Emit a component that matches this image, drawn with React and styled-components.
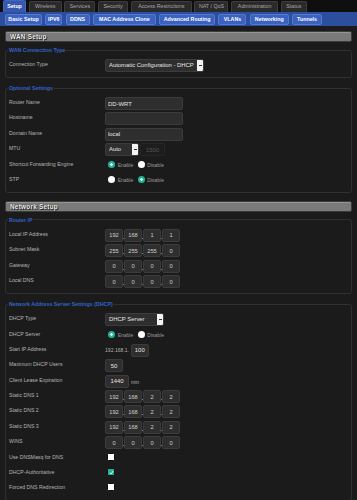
import { Fragment } from 'react'
import styled, { createGlobalStyle } from 'styled-components'

const FONT = '"Liberation Sans", Arial, sans-serif'

const GlobalStyle = createGlobalStyle`
  html, body {
    margin: 0;
    padding: 0;
    background: #1b1b1b;
  }
  body {
    font-family: ${FONT};
    width: 357px;
    height: 500px;
    overflow: hidden;
  }
`

const MAIN_TABS = [
  { label: 'Setup', w: 23, active: true },
  { label: 'Wireless', w: 33 },
  { label: 'Services', w: 31 },
  { label: 'Security', w: 30 },
  { label: 'Access Restrictions', w: 61 },
  { label: 'NAT / QoS', w: 34 },
  { label: 'Administration', w: 47 },
  { label: 'Status', w: 26 },
]

const SUB_TABS = [
  { label: 'Basic Setup', w: 37 },
  { label: 'IPV6', w: 17 },
  { label: 'DDNS', w: 24 },
  { label: 'MAC Address Clone', w: 63 },
  { label: 'Advanced Routing', w: 56 },
  { label: 'VLANs', w: 28 },
  { label: 'Networking', w: 39 },
  { label: 'Tunnels', w: 30 },
]

const TopBar = styled.nav`
  display: flex;
  align-items: flex-end;
  gap: 2.7px;
  height: 12px;
  box-sizing: border-box;
  padding-left: 3px;
  background: #0f0f0f;
`

const MainTab = styled.div`
  box-sizing: border-box;
  width: ${({ $w }) => $w}px;
  height: ${({ $active }) => $active ? 12 : 11}px;
  display: flex;
  align-items: center;
  justify-content: center;
  font: ${({ $active }) => $active ? 'bold' : 'normal'} 5.3px/1 ${FONT};
  color: ${({ $active }) => $active ? '#ffffff' : '#a8a8a8'};
  background: ${({ $active }) => $active ? '#3459ad' : '#2a2a2a'};
  border: 1px solid ${({ $active }) => $active ? '#4166bb' : '#3d3d3d'};
  border-bottom: none;
  border-radius: 2px 2px 0 0;
  white-space: nowrap;
`

const SubBar = styled.nav`
  display: flex;
  gap: 3.3px;
  height: 14px;
  box-sizing: border-box;
  padding: 2px 0 1px 5px;
  background: #2d4d9d;
`

const SubTab = styled.div`
  box-sizing: border-box;
  width: ${({ $w }) => $w}px;
  height: 11px;
  display: flex;
  align-items: center;
  justify-content: center;
  font: bold 5.3px/1 ${FONT};
  color: #ffffff;
  background: #3b62c1;
  border: 1px solid #5379d1;
  border-radius: 2px;
  white-space: nowrap;
`

const Section = styled.section`
  padding-top: 5px;
  & + & {
    padding-top: 8px;
  }
`

const SectionTitle = styled.h2`
  margin: 0 5px 4px;
  height: 11px;
  box-sizing: border-box;
  padding-left: 4px;
  background: #7a7a7a;
  border: 1px solid #3c3c3c;
  border-radius: 2px;
  box-shadow: inset 0 1px 0 #959595;
  font: bold 6.3px/9px ${FONT};
  letter-spacing: 0.3px;
  color: #f2f2f2;
  text-shadow: 0 0 1px #000, 1px 1px 0 #2a2a2a;
`

const Group = styled.fieldset`
  margin: 0 5px;
  padding: 5px 3px;
  min-width: 0;
  border: 1px solid #303030;
  border-radius: 3px;
  & + & {
    margin-top: 6px;
  }
`

const Legend = styled.legend`
  padding: 0 1px;
  margin-left: -1px;
  font: bold 5.3px/8px ${FONT};
  color: #3462c8;
`

const Row = styled.div`
  display: flex;
  align-items: flex-start;
  min-height: 13px;
  & + & {
    margin-top: 2.4px;
  }
`

const Label = styled.div`
  flex: none;
  width: 96px;
  padding-top: 2px;
  font: 5.2px/7px ${FONT};
  color: #b4b4b4;
`

const Controls = styled.div`
  display: flex;
  align-items: flex-start;
`

const TextInput = styled.input`
  box-sizing: border-box;
  width: ${({ $w }) => $w}px;
  height: 13px;
  margin: 0;
  padding: 0 2px;
  background: ${({ disabled }) => disabled ? '#1d1d1d' : '#2e2e2e'};
  border: 1px solid ${({ disabled }) => disabled ? '#272727' : '#3c3c3c'};
  border-radius: 2px;
  outline: none;
  font: 5.9px ${FONT};
  color: ${({ disabled }) => disabled ? '#575757' : '#e4e4e4'};
  text-align: ${({ $center }) => $center ? 'center' : 'left'};
`

const OctetInput = styled(TextInput)`
  font-size: 5.7px;
  color: #cfcfcf;
`

const IpDot = styled.span`
  align-self: flex-end;
  width: 1px;
  height: 1px;
  margin-bottom: 3px;
  background: #7a7a7a;
`

const Select = styled.div`
  display: flex;
  box-sizing: border-box;
  width: ${({ $w }) => $w}px;
  height: 13px;
  background: #2e2e2e;
  border: 1px solid #3c3c3c;
  border-radius: 2px;
  overflow: hidden;
`

const SelectText = styled.span`
  flex: 1;
  padding-left: 3px;
  font: 5.9px/11px ${FONT};
  color: #e4e4e4;
  white-space: nowrap;
  overflow: hidden;
`

const SelectArrow = styled.span`
  flex: none;
  width: 6px;
  display: flex;
  align-items: center;
  justify-content: center;
  background: #f3f3f3;
  &::after {
    content: '';
    width: 3px;
    height: 1px;
    background: #333;
  }
`

const Choice = styled.div`
  display: flex;
  align-items: flex-start;
  padding-left: 3px;
`

const Radio = styled.span`
  flex: none;
  width: 7px;
  height: 7px;
  margin-top: 2px;
  border-radius: 50%;
  background: ${({ $on }) => $on
    ? 'radial-gradient(circle, #e9fff8 0 1.1px, #1fb596 1.5px)'
    : '#ffffff'};
`

const ChoiceText = styled.span`
  margin: 0 4.4px 0 2.7px;
  padding-top: 3px;
  font: 5px/7px ${FONT};
  color: #9c9c9c;
`

const Hint = styled.span`
  padding: ${({ $pad }) => $pad || '3px 0 0'};
  font: 5.1px/7px ${FONT};
  color: #b0b0b0;
  white-space: nowrap;
`

const Check = styled.span`
  flex: none;
  box-sizing: border-box;
  width: 8px;
  height: 8px;
  margin: 1px 0 0 2px;
  display: flex;
  align-items: center;
  justify-content: center;
  border: 1px solid #0c0c0c;
  border-radius: 1.5px;
  background: ${({ $on }) => $on ? '#1db394' : '#ffffff'};
`

const Field = ({ label, children }) =>
  <Row>
    <Label>{label}</Label>
    <Controls>{children}</Controls>
  </Row>

const Dropdown = ({ w, value }) =>
  <Select $w={w}>
    <SelectText>{value}</SelectText>
    <SelectArrow />
  </Select>

const IpField = ({ parts }) =>
  <>
    {parts.map((p, i) =>
      <Fragment key={i}>
        {i > 0 && <IpDot />}
        <OctetInput $w={18} $center value={p} readOnly />
      </Fragment>
    )}
  </>

const RadioPair = ({ enabled }) =>
  <Choice>
    <Radio $on={enabled} />
    <ChoiceText>Enable</ChoiceText>
    <Radio $on={!enabled} />
    <ChoiceText>Disable</ChoiceText>
  </Choice>

const Checkbox = ({ on }) =>
  <Check $on={on}>
    {on &&
      <svg width="5" height="5" viewBox="0 0 10 10">
        <path d="M1.5 5.5l2.5 2.5 4.5-6" stroke="#fff" strokeWidth="1.8" fill="none" />
      </svg>}
  </Check>

const App = () =>
  <>
    <GlobalStyle />
    <TopBar>
      {MAIN_TABS.map(t =>
        <MainTab key={t.label} $w={t.w} $active={t.active}>{t.label}</MainTab>)}
    </TopBar>
    <SubBar>
      {SUB_TABS.map(t => <SubTab key={t.label} $w={t.w}>{t.label}</SubTab>)}
    </SubBar>

    <Section>
      <SectionTitle>WAN Setup</SectionTitle>
      <Group>
        <Legend>WAN Connection Type</Legend>
        <Field label="Connection Type">
          <Dropdown w={99} value="Automatic Configuration - DHCP" />
        </Field>
      </Group>
      <Group>
        <Legend>Optional Settings</Legend>
        <Field label="Router Name">
          <TextInput $w={78} value="DD-WRT" readOnly />
        </Field>
        <Field label="Hostname">
          <TextInput $w={78} value="" readOnly />
        </Field>
        <Field label="Domain Name">
          <TextInput $w={78} value="local" readOnly />
        </Field>
        <Field label="MTU">
          <Dropdown w={34} value="Auto" />
          <TextInput $w={25} $center value="1500" disabled readOnly style={{ marginLeft: 1 }} />
        </Field>
        <Field label="Shortcut Forwarding Engine">
          <RadioPair enabled />
        </Field>
        <Field label="STP">
          <RadioPair enabled={false} />
        </Field>
      </Group>
    </Section>

    <Section>
      <SectionTitle>Network Setup</SectionTitle>
      <Group>
        <Legend>Router IP</Legend>
        <Field label="Local IP Address"><IpField parts={['192', '168', '1', '1']} /></Field>
        <Field label="Subnet Mask"><IpField parts={['255', '255', '255', '0']} /></Field>
        <Field label="Gateway"><IpField parts={['0', '0', '0', '0']} /></Field>
        <Field label="Local DNS"><IpField parts={['0', '0', '0', '0']} /></Field>
      </Group>
      <Group>
        <Legend>Network Address Server Settings (DHCP)</Legend>
        <Field label="DHCP Type">
          <Dropdown w={59} value="DHCP Server" />
        </Field>
        <Field label="DHCP Server">
          <RadioPair enabled />
        </Field>
        <Field label="Start IP Address">
          <Hint $pad="3px 1.7px 0 0">192.168.1.</Hint>
          <TextInput $w={18} $center value="100" readOnly />
        </Field>
        <Field label="Maximum DHCP Users">
          <TextInput $w={18} $center value="50" readOnly />
        </Field>
        <Field label="Client Lease Expiration">
          <TextInput $w={24} $center value="1440" readOnly />
          <Hint $pad="4px 0 0 2px">min</Hint>
        </Field>
        <Field label="Static DNS 1"><IpField parts={['192', '168', '2', '2']} /></Field>
        <Field label="Static DNS 2"><IpField parts={['192', '168', '2', '2']} /></Field>
        <Field label="Static DNS 3"><IpField parts={['192', '168', '2', '2']} /></Field>
        <Field label="WINS"><IpField parts={['0', '0', '0', '0']} /></Field>
        <Field label="Use DNSMasq for DNS"><Checkbox /></Field>
        <Field label="DHCP-Authoritative"><Checkbox on /></Field>
        <Field label="Forced DNS Redirection"><Checkbox /></Field>
      </Group>
    </Section>
  </>

export default App
